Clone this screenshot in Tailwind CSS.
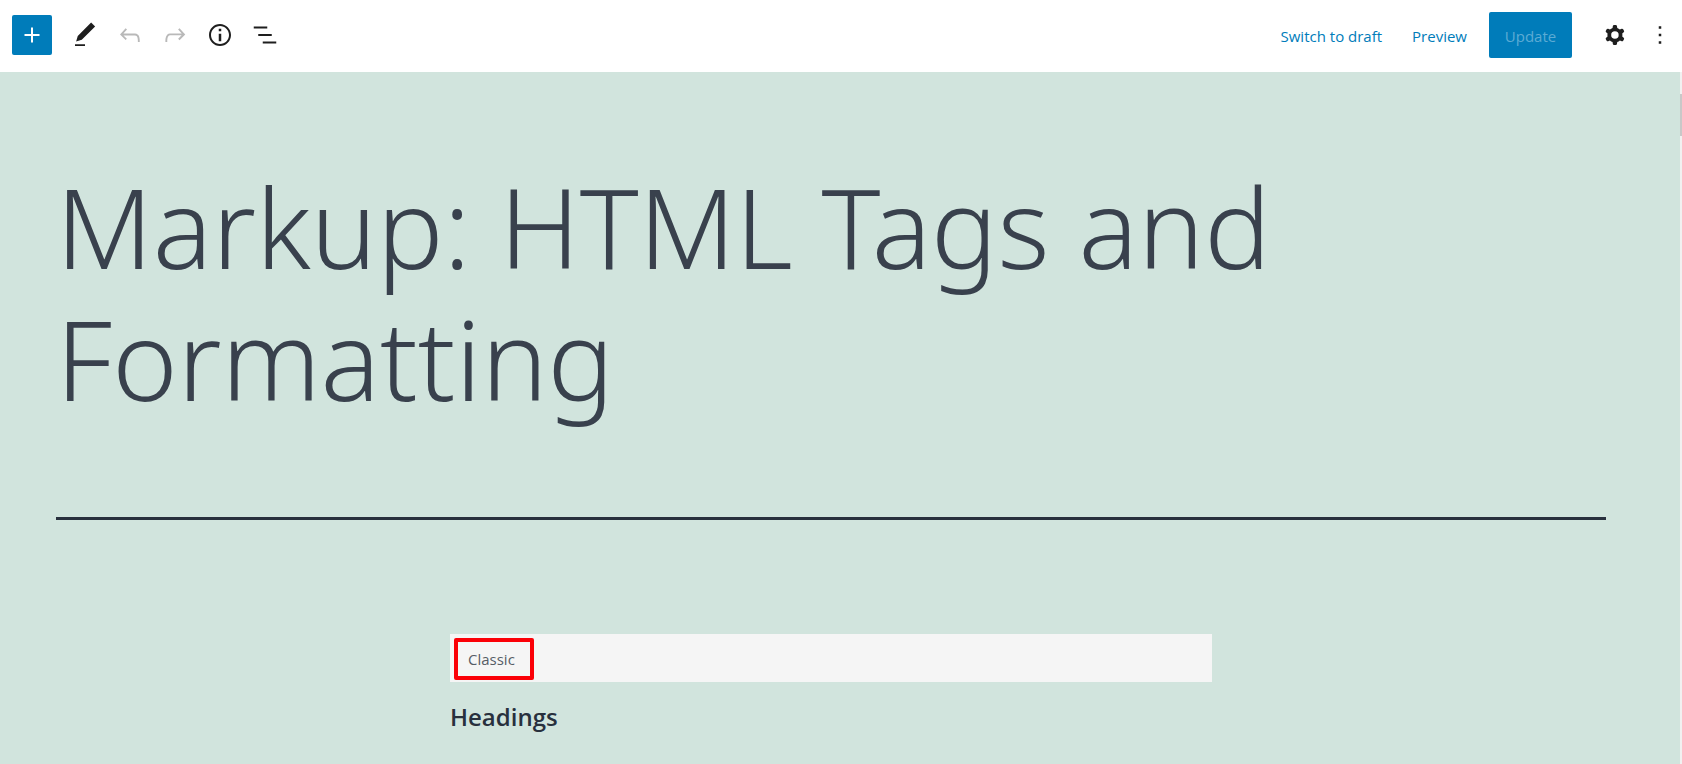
<!DOCTYPE html>
<html lang="en">
  <head>
    <meta charset="UTF-8" />
    <meta name="viewport" content="width=device-width, initial-scale=1.0" />
    <title>Edit Post: Markup: HTML Tags and Formatting</title>
    <script src="https://cdn.jsdelivr.net/npm/@tailwindcss/browser@4"></script>
  </head>
  <body class="flex h-screen flex-col overflow-hidden bg-white font-['Open_Sans',sans-serif] text-[#1e1e1e]">
    <!-- Editor toolbar -->
    <header class="flex h-[72px] shrink-0 items-center justify-between pb-0.5 pl-3">
      <div class="flex items-center">
        <button class="mr-2.5 flex size-10 items-center justify-center rounded-xs bg-[#007cba] text-white" aria-label="Add block">
          <svg class="size-[30px]" viewBox="0 0 24 24" fill="currentColor"><path d="M18 11.2h-5.2V6h-1.6v5.2H6v1.6h5.2V18h1.6v-5.2H18z" /></svg>
        </button>
        <button class="flex size-[45px] items-center justify-center" aria-label="Tools">
          <svg class="size-[30px]" viewBox="0 0 24 24" fill="currentColor"><path d="M20.1 5.1L16.9 2 6.2 12.7l-1.3 4.4 4.5-1.3L20.1 5.1zM4 20.8h8v-1.5H4v1.5z" /></svg>
        </button>
        <button class="flex size-[45px] items-center justify-center text-[#b9b9b9]" aria-label="Undo">
          <svg class="size-[30px]" viewBox="0 0 24 24" fill="currentColor"><path d="M18.3 11.7c-.6-.6-1.4-.9-2.3-.9H6.7l2.9-3.3-1.1-1-4.5 5L8.5 16l1-1-2.7-2.7H16c.5 0 .9.2 1.3.5 1 1 1 3.4 1 4.5v.3h1.5v-.2c0-1.5 0-4.3-1.5-5.7z" /></svg>
        </button>
        <button class="flex size-[45px] items-center justify-center text-[#b9b9b9]" aria-label="Redo">
          <svg class="size-[30px]" viewBox="0 0 24 24" fill="currentColor"><path d="M15.6 6.5l-1.1 1 2.9 3.3H8c-.9 0-1.7.3-2.3.9-1.4 1.5-1.4 4.2-1.4 5.6v.2h1.5v-.3c0-1.1 0-3.5 1-4.5.3-.3.7-.5 1.3-.5h9.2L14.5 15l1.1 1.1 4.6-4.6-4.6-5z" /></svg>
        </button>
        <button class="flex size-[45px] items-center justify-center" aria-label="Details">
          <svg class="size-[30px]" viewBox="0 0 24 24" fill="currentColor"><path d="M12 3.2c-4.8 0-8.8 3.9-8.8 8.8 0 4.8 3.9 8.8 8.8 8.8 4.8 0 8.8-3.9 8.8-8.8 0-4.8-4-8.8-8.8-8.8zm0 16c-4 0-7.2-3.3-7.2-7.2C4.8 8 8 4.8 12 4.8s7.2 3.3 7.2 7.2c0 4-3.2 7.2-7.2 7.2zM11 17h2v-6h-2v6zm0-8h2V7h-2v2z" /></svg>
        </button>
        <button class="flex size-[45px] items-center justify-center" aria-label="List view">
          <svg class="size-[30px]" viewBox="0 0 24 24" fill="currentColor"><path d="M13.8 5.2H3v1.5h10.8V5.2zm-3.6 12v1.5H21v-1.5H10.2zm7.2-6H6.6v1.5h10.8v-1.5z" /></svg>
        </button>
      </div>
      <div class="flex items-center text-[15px] text-[#007cba]">
        <button class="mr-[30px] pt-0.5">Switch to draft</button>
        <button class="mr-[22px] pt-0.5">Preview</button>
        <button class="mr-5 h-[46px] w-[83px] rounded-xs bg-[#007cba] pt-0.5 text-[#5cabd4]">Update</button>
        <button class="flex size-[45px] items-center justify-center text-[#1e1e1e]" aria-label="Settings">
          <svg class="size-[30px]" viewBox="0 0 24 24" fill="currentColor"><path fill-rule="evenodd" d="M10.289 4.836A1 1 0 0111.275 4h1.306a1 1 0 01.987.836l.244 1.466c.787.26 1.503.679 2.108 1.218l1.393-.522a1 1 0 011.216.437l.653 1.13a1 1 0 01-.23 1.273l-1.148.944a6.025 6.025 0 010 2.435l1.149.946a1 1 0 01.23 1.272l-.653 1.13a1 1 0 01-1.216.437l-1.394-.522c-.605.54-1.32.958-2.108 1.218l-.244 1.466a1 1 0 01-.987.836h-1.306a1 1 0 01-.986-.836l-.244-1.466a5.995 5.995 0 01-2.108-1.218l-1.394.522a1 1 0 01-1.217-.436l-.653-1.131a1 1 0 01.23-1.272l1.149-.946a6.026 6.026 0 010-2.435l-1.148-.944a1 1 0 01-.23-1.272l.653-1.131a1 1 0 011.217-.437l1.393.522a5.994 5.994 0 012.108-1.218l.244-1.466zM14.929 12a3 3 0 11-6 0 3 3 0 016 0z" clip-rule="evenodd" /></svg>
        </button>
        <button class="flex size-[45px] items-center justify-center text-[#1e1e1e]" aria-label="Options">
          <svg class="size-[30px]" viewBox="0 0 24 24" fill="currentColor"><path d="M13 19h-2v-2h2v2zm0-6h-2v-2h2v2zm0-6h-2V5h2v2z" /></svg>
        </button>
      </div>
    </header>

    <div class="flex min-h-0 flex-1">
      <!-- Post canvas -->
      <main class="min-w-0 flex-1 overflow-hidden bg-[#d1e4dd] pt-[88px] pr-[74px] pl-14 text-[#28303d]">
        <h1 class="border-b-3 border-[#28303d] pb-[93px] font-['Noto_Sans',sans-serif] text-[111px] leading-[132px] font-light text-[#39414d]">Markup: HTML Tags and Formatting</h1>
        <div class="mx-auto mt-[114px] max-w-[762px]">
          <div class="flex h-12 items-end bg-[#f5f5f5] px-1 pb-0.5 text-[15px] text-[#555d66]">
            <span class="flex h-[42px] w-20 items-center rounded-xs border-4 border-[#fb0007] pl-2.5">Classic</span>
          </div>
          <h2 class="mt-[17px] text-2xl leading-9 font-semibold">Headings</h2>
        </div>
      </main>
      <!-- Scrollbar -->
      <div class="w-0.5 bg-[#f1f1f1] pt-[22px]">
        <div class="h-[42px] bg-[#c8c8c8]"></div>
      </div>
    </div>
  </body>
</html>
